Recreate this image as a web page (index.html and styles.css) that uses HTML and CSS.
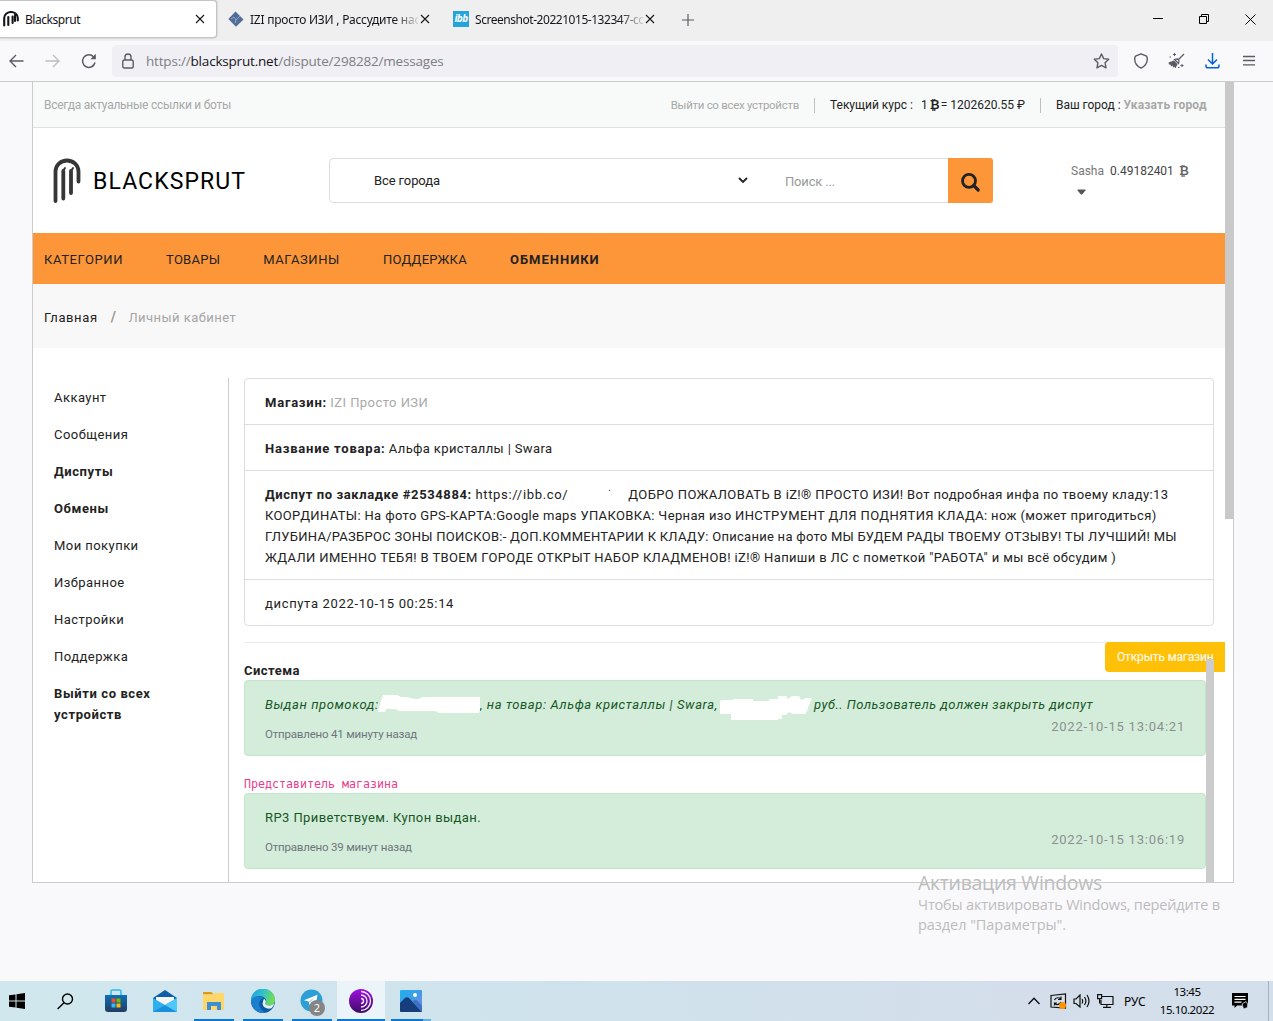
FILE: index.html
```html
<!DOCTYPE html>
<html lang="ru">
<head>
    <meta charset="UTF-8">
    <meta name="viewport" content="width=device-width, initial-scale=1.0">
    <title>Blacksprut</title>
    <link rel="stylesheet" href="styles.css">
</head>
<body>

<!-- tabs -->
<div class="tabs">
    <div class="tab tab-active">
        <svg class="fav" viewBox="0 0 16 16" fill="none" stroke="#15141a" stroke-width="2.1" stroke-linecap="round"><path d="M1.2 14.5V7a6.8 6 0 0 1 13.6 0v2.5M5.3 14V6M9.6 12V5.500M12 4v6"/></svg>
        <span class="tab-title">Blacksprut</span>
        <svg class="x" viewBox="0 0 10 10" stroke="#15141a" stroke-width="1.1"><path d="M1 1l8 8M9 1l-8 8"/></svg>
    </div>
    <div class="tab tab-forum">
        <svg class="fav" viewBox="0 0 16 16"><path fill="#4f6d96" d="M7.500 .5L15.500 8.500 8 15.800.4 8z"/><path d="M3 8l3-2 2 3 4-4M7 12l1-3" stroke="#93a7c3" fill="none"/></svg>
        <span class="tab-title fade">IZI просто ИЗИ , Рассудите нас</span>
        <svg class="x" viewBox="0 0 10 10" stroke="#15141a" stroke-width="1.1"><path d="M1 1l8 8M9 1l-8 8"/></svg>
    </div>
    <div class="tab tab-ibb">
        <span class="fav ibb">ibb</span>
        <span class="tab-title tight fade">Screenshot-20221015-132347-co</span>
        <svg class="x" viewBox="0 0 10 10" stroke="#15141a" stroke-width="1.1"><path d="M1 1l8 8M9 1l-8 8"/></svg>
    </div>
    <svg class="plus" viewBox="0 0 12 12" stroke="#5b5b66" stroke-width="1.2"><path d="M6 0v12M0 6h12"/></svg>
    <div class="win-buttons">
        <svg width="10" height="10" stroke="#000" fill="none"><path d="M0 4.500h10"/></svg>
        <svg width="10" height="10" stroke="#000" fill="none"><path d="M.5 2.500h7v7h-7zM2.500 2.500v-2h7v7h-2"/></svg>
        <svg width="11" height="11" stroke="#000" fill="none"><path d="M.5 .5l10 10M10.500 .5l-10 10"/></svg>
    </div>
</div>

<!-- address bar -->
<div class="toolbar">
    <svg class="back" width="15" height="14" fill="none" stroke="#5b5b66" stroke-width="1.4"><path d="M14.500 7H1M7 1L1 7l6 6"/></svg>
    <svg class="forward" width="15" height="14" fill="none" stroke="#bdbdc2" stroke-width="1.4"><path d="M.5 7H14M8 1l6 6-6 6"/></svg>
    <svg class="reload" width="16" height="16" fill="none" stroke="#5b5b66" stroke-width="1.5"><path d="M14 9.500A6.300 6.300 0 1 1 12.500 3.800L14 5"/><path d="M14.800 .8v5.400H9.400z" fill="#5b5b66" stroke="none"/></svg>
    <div class="url">
        <svg width="12" height="16" fill="none" stroke="#5b5b66" stroke-width="1.4"><rect x=".8" y="7" width="10.400" height="8" rx="1.500"/><path d="M3 7V4a3 3 0 0 1 6 0v3"/></svg>
        <span class="url-text">https://<b>blacksprut.net</b>/dispute/298282/messages</span>
        <svg class="star" width="17" height="16" fill="none" stroke="#5b5b66" stroke-width="1.400" stroke-linejoin="round"><path d="M8.500 1l2.200 4.600 5 .7-3.600 3.500.9 5-4.500-2.400L4 14.800l.9-5L1.300 6.300l5-.7z"/></svg>
    </div>
    <svg class="shield" width="16" height="16" fill="none" stroke="#5b5b66" stroke-width="1.400"><path d="M8 .8l5.500 2.400Q14.300 4 14.300 6q0 6-6.300 9.200Q1.700 12 1.700 6q0-2 .8-2.800z" stroke-linejoin="round"/></svg>
    <svg class="broom" width="17" height="17" fill="none" stroke="#5b5b66" stroke-width="1.300"><path d="M16 1l-5.500 5.500M6.500 6.500q3-1 4 0t0 4z"/><path d="M.5 9.500L6 7.500l3.500 3.800-2 4-1.300-1.600-1 .8-.7-2-1.500 1-.3-1.700-1.700-.3z" fill="#5b5b66" stroke="none"/><path d="M6.500 0v3M5 1.500h3M14 11v3M12.500 12.500h3M1.500 4h1.500M10 14.500h1.500" stroke-width="1"/></svg>
    <svg class="download" width="15" height="16" fill="none" stroke="#0061e0" stroke-width="1.500"><path d="M7.500 0v11M3 6.500L7.500 11 12 6.500M1 11.500v1.500a1.800 1.800 0 0 0 1.800 1.800h9.400A1.800 1.800 0 0 0 14 13v-1.500"/></svg>
    <svg class="menu" width="12" height="12" stroke="#5b5b66" stroke-width="1.300"><path d="M0 1.500h12M0 5.500h12M0 9.800h12"/></svg>
</div>

<div class="viewport">
<div class="page">
    <div class="site">
        <div class="topbar">
            <span class="muted links">Всегда актуальные ссылки и боты</span>
            <span class="muted logout">Выйти со всех устройств</span>
            <span class="rate"><span>Текущий курс :</span><span class="one">1</span><span class="btc">₿</span><span>= 1202620.55 ₽</span></span>
            <span class="city">Ваш город : <b>Указать город</b></span>
        </div>

        <header class="header">
            <svg class="logo" width="28" height="46" fill="none" stroke="#363636" stroke-width="3.800" stroke-linecap="round"><path d="M2.500 43V13.500a11.500 11 0 0 1 23 0v10M10.300 40.500V13M18 35V13"/><path d="M10 13l2-3M18 13l2-3" stroke-width="2"/></svg>
            <span class="brand">BLACKSPRUT</span>
            <div class="search">
                <span class="search-city">Все города</span>
                <svg width="10" height="7" fill="none" stroke="#222" stroke-width="1.800"><path d="M1 1l4 4 4-4"/></svg>
                <span class="search-text">Поиск ...</span>
                <span class="search-btn"><svg width="20" height="21" fill="none" stroke="#222"><circle cx="8" cy="8.800" r="6.500" stroke-width="2.800"/><path d="M12.700 13.500l4.500 4.500" stroke-width="3.200" stroke-linecap="round"/></svg></span>
            </div>
            <div class="user">
                <span class="name">Sasha</span><span>0.49182401</span><span class="btc">₿</span>
                <svg class="caret" width="9" height="6" fill="#555"><path d="M1 .5h7q1 .3.500 1L5.500 5q-1 1-2 0L.5 1.500Q0 .8 1 .5z"/></svg>
            </div>
        </header>

        <nav class="nav">
            <span class="n1">КАТЕГОРИИ</span>
            <span class="n2">ТОВАРЫ</span>
            <span class="n3">МАГАЗИНЫ</span>
            <span class="n4">ПОДДЕРЖКА</span>
            <span class="n5">ОБМЕННИКИ</span>
        </nav>

        <div class="breadcrumb"><span>Главная</span><i>/</i><span class="here">Личный кабинет</span></div>

        <div class="content">
            <aside class="sidebar">
                <a>Аккаунт</a>
                <a>Сообщения</a>
                <a class="bold">Диспуты</a>
                <a class="bold">Обмены</a>
                <a>Мои покупки</a>
                <a>Избранное</a>
                <a>Настройки</a>
                <a>Поддержка</a>
                <a class="bold">Выйти со всех устройств</a>
            </aside>

            <main class="main">
                <div class="list">
                    <div class="item"><b class="l1">Магазин:</b> <span class="shop">IZI Просто ИЗИ</span></div>
                    <div class="item"><b class="l2">Название товара:</b> <span class="product">Альфа кристаллы | Swara</span></div>
                    <div class="item">
                        <div class="line t1"><b>Диспут по закладке #2534884:</b> <span class="link">https://ibb.co/</span><span class="gap">.</span>ДОБРО ПОЖАЛОВАТЬ В iZ!® ПРОСТО ИЗИ! Вот подробная инфа по твоему кладу:13</div>
                        <div class="line t2">КООРДИНАТЫ: На фото GPS-КАРТА:Google maps УПАКОВКА: Черная изо ИНСТРУМЕНТ ДЛЯ ПОДНЯТИЯ КЛАДА: нож (может пригодиться)</div>
                        <div class="line t3">ГЛУБИНА/РАЗБРОС ЗОНЫ ПОИСКОВ:- ДОП.КОММЕНТАРИИ К КЛАДУ: Описание на фото МЫ БУДЕМ РАДЫ ТВОЕМУ ОТЗЫВУ! ТЫ ЛУЧШИЙ! МЫ</div>
                        <div class="line t4">ЖДАЛИ ИМЕННО ТЕБЯ! В ТВОЕМ ГОРОДЕ ОТКРЫТ НАБОР КЛАДМЕНОВ! iZ!® Напиши в ЛС с пометкой "РАБОТА" и мы всё обсудим )</div>
                    </div>
                    <div class="item date-item">диспута 2022-10-15 00:25:14</div>
                </div>

                <div class="chat">
                    <span class="open-shop">Открыть магазин</span>
                    <div class="messages">
                        <div class="from">Система</div>
                        <div class="alert">
                            <div class="text system"><span class="promo">Выдан промокод:</span><span class="hide h1"><svg width="103" height="18" fill="#fff"><path d="M5 0h14l4 2h6l7 2h4l5-2h57v13l-1 3H61l-4-2H22l-5-2H8l-1 3H0l2-8z"/></svg></span><span class="goods">, на товар: Альфа кристаллы | Swara,</span><span class="hide h2"><svg width="95" height="24" fill="#fff"><path d="M0 5l3-1h10V3h20v2h16V3h9V0h8l2 3 4-3h7l2 4 5-2h6l-3 7-2 6-2 3h-12l-4-2-3 3h-4v4h-4v2H11v-7H0z"/></svg></span><span class="close">руб.. Пользователь должен закрыть диспут</span></div>
                            <div class="meta"><span class="ago">Отправлено 41 минуту назад</span><span class="stamp">2022-10-15 13:04:21</span></div>
                        </div>
                        <code class="seller">Представитель магазина</code>
                        <div class="alert">
                            <div class="text">RP3 Приветствуем. Купон выдан.</div>
                            <div class="meta"><span class="ago">Отправлено 39 минут назад</span><span class="stamp">2022-10-15 13:06:19</span></div>
                        </div>
                    </div>
                    <div class="chat-scroll"></div>
                </div>
            </main>
        </div>
    </div>
    <div class="scrollbar"></div>
</div>
<div class="watermark">
    <div class="w1">Активация Windows</div>
    <div class="w2">Чтобы активировать Windows, перейдите в</div>
    <div class="w3">раздел "Параметры".</div>
</div>
</div>

<!-- taskbar -->
<div class="taskbar">
    <div class="app start"><svg width="16" height="16"><path d="M0 2.300L6.500 1.400V7.500H0zM7.500 1.200L16 0v7.500H7.500zM0 8.500h6.500v6.100L0 13.700zM7.500 8.500H16V16l-8.500-1.200z"/></svg></div>
    <div class="app find"><svg width="17" height="17" fill="none" stroke="#000" stroke-width="1.400"><circle cx="10.500" cy="6" r="5"/><path d="M7 9.800L.6 16"/></svg></div>
    <div class="app"><svg width="24" height="24">
        <defs><linearGradient id="store" x1="0" y1="0" x2="0" y2="1"><stop offset="0" stop-color="#0e70b4"/><stop offset="1" stop-color="#223c63"/></linearGradient></defs>
        <path d="M7 6V2.500q0-1.500 1.500-1.500h7Q17 1 17 2.500V6" fill="none" stroke="#2bbdf0" stroke-width="1.600"/>
        <path d="M1 6h22v14q0 3-3 3H4q-3 0-3-3z" fill="url(#store)"/>
        <path fill="#f25022" d="M7.500 9.500h4v4h-4z"/><path fill="#7fba00" d="M12.500 9.500h4v4h-4z"/><path fill="#38b6f1" d="M7.500 14.500h4v4h-4z"/><path fill="#ffb900" d="M12.500 14.500h4v4h-4z"/>
    </svg></div>
    <div class="app"><svg width="24" height="24">
        <path d="M0 9L12 1l12 8v3H0z" fill="#0d5ea8"/><path d="M3 8h18v8H3z" fill="#f3f5f6"/><path d="M0 9l12 7L24 9v14H0z" fill="#2fb0ee"/><path d="M0 23L12 16l12 7z" fill="#1a8fdc"/><path d="M12 16L24 9v14z" fill="#4fc7f8"/>
    </svg></div>
    <div class="app run"><svg width="22" height="20">
        <path d="M0 1h8.500l2 2.500H0z" fill="#dc9b12"/><path d="M0 3.500h10L11.500 2H21v17H0z" fill="#ffd768"/><path d="M4 11h14v8h-4v-4H8v4H4z" fill="#3c8fd4"/>
    </svg></div>
    <div class="app run"><svg width="24" height="24">
        <defs><linearGradient id="edge" x1="0" y1="0" x2="1" y2=".3"><stop offset="0" stop-color="#1f9fe0"/><stop offset=".5" stop-color="#2fbfd0"/><stop offset="1" stop-color="#6fdd58"/></linearGradient></defs>
        <circle cx="12" cy="12" r="12" fill="#0c59a4"/>
        <path d="M0 12A12 12 0 0 1 24 11q0 5.500-6 5.500-4 0-3.500-2 1.500-2 0-4.500Q12 6.500 7 7.200 1.500 8 0 12z" fill="url(#edge)"/>
        <path d="M0 12Q1.500 7.500 7 7.200q4 0 6 2.300-4.500 0-5 5Q8 20 14.500 23.600A12 12 0 0 1 0 12z" fill="#1b7fd0"/>
        <path d="M13 9.800q3 2.200 1.200 5 .3 2.200 4.800 1.700 3-.3 4.500-2-1 2.800-3 4.800-4 1-7-1-3.500-2.800-.5-8.500z" fill="#e4f0f5"/>
    </svg></div>
    <div class="app run telegram"><svg width="24" height="24">
        <circle cx="11.500" cy="11.500" r="11" fill="#2c9fd6"/><path d="M4 11.200L17.500 5.800 15.500 17l-4-3-2 2-.8-3.600z" fill="#fff"/><path d="M8.700 12.400L15 8l-5 5.200z" fill="#a9cbe0"/>
    </svg><span class="badge">2</span></div>
    <div class="app run active"><svg width="24" height="24" fill="none">
        <defs><linearGradient id="tor" x1="0" y1="0" x2="0" y2="1"><stop offset="0" stop-color="#a20fe0"/><stop offset="1" stop-color="#3b0c66"/></linearGradient></defs>
        <circle cx="12" cy="12" r="12" fill="url(#tor)"/><path d="M12 2.500a9.500 9.500 0 0 1 0 19M12 6a6 6 0 0 1 0 12M12 9.500a2.500 2.500 0 0 1 0 5" stroke="#f4e8fb" stroke-width="1.400"/>
    </svg></div>
    <div class="app run photos"><svg width="22" height="22">
        <defs><linearGradient id="sky" x1="0" y1="0" x2="1" y2="1"><stop offset="0" stop-color="#1fb2ea"/><stop offset=".5" stop-color="#3f9be8"/><stop offset="1" stop-color="#8e83df"/></linearGradient></defs>
        <rect width="22" height="22" rx="1" fill="url(#sky)"/><path d="M0 13l5-5q2-1.500 4 0l13 14H1q-1 0-1-1z" fill="#173e7c"/><path d="M12.500 11.500l1.500-1q1.500-1 3 0l5 5V22z" fill="#3e6fc4"/><circle cx="15" cy="5" r="2" fill="#fff"/>
    </svg></div>

    <div class="tray">
        <svg width="12" height="8" fill="none" stroke="#111" stroke-width="1.400"><path d="M.5 7L6 1.300 11.500 7"/></svg>
        <svg class="sync" width="17" height="17" fill="none" stroke="#111" stroke-width="1.200"><path d="M1 2.500L15.500 1v14L1 14zM4.500 7q1-3 5-2l1 1M11 3.500v3H8M11 9q-1 3-5 2.500L4.500 10M4.500 12.500V10H7"/><circle cx="12.500" cy="12.500" r="3.500" fill="#ff9500" stroke="none"/></svg>
        <svg class="volume" width="17" height="14" fill="none" stroke="#111" stroke-width="1.200"><path d="M1 5h2l4-4v12L3 9.500H1zM9 5q1.300 2 0 4.500M11.500 3q2.800 4 0 8M14 1q4 6 0 12"/></svg>
        <svg class="net" width="17" height="14" fill="none" stroke="#111" stroke-width="1.200"><path d="M5 2.500h11v8H4V6M9.800 10.500v3M6 13.400h8M.6 .6h4v4h-4zM2.600 4.600v5"/></svg>
        <span class="lang">РУС</span>
        <span class="clock">13:45<br><em>15.10.2022</em></span>
        <svg class="notes" width="17" height="17"><path d="M0 0h16v12.500H5L2.500 15v-2.500H0z"/><path d="M2.500 3.500h11M2.500 6.300h11M2.500 9.200h7" stroke="#fff" stroke-width="1.200"/><path d="M10 11l4-2.500q2.500 2 1.500 6l-4 1.500z" stroke="#d5dfea" stroke-width=".8"/></svg>
        <span class="peek"></span>
    </div>
</div>

</body>
</html>
```
FILE: styles.css
```css
* {
    box-sizing: border-box;
}

body {
    margin: 0;
    width: 1273px;
    height: 1021px;
    overflow: hidden;
    background: #f9f9fb;
    font-family: "Roboto", sans-serif;
    font-size: 13px;
    line-height: 21px;
    color: #222;
}

svg {
    display: block;
    flex: none;
}

/* tabs */
.tabs {
    display: flex;
    height: 41px;
    background: #efefef;
    font-family: "Noto Sans", "Open Sans", sans-serif;
    font-size: 12px;
    color: #15141a;
}

.tab {
    display: flex;
    align-items: center;
    height: 38px;
    padding-left: 3px;
    white-space: nowrap;
}

.tab-active {
    width: 217px;
    background: #fff;
    border: 1px solid #c4c4c8;
    border-left: 0;
    border-radius: 0 4px 4px 0;
    box-shadow: 0 0 2px rgba(0, 0, 0, 0.3);
}

.tab-forum {
    width: 225px;
    padding-left: 11px;
}

.tab-ibb {
    width: 226px;
    padding-left: 11px;
}

.fav {
    width: 16px;
    height: 16px;
    flex: none;
}

.ibb {
    background: #24a4dd;
    color: #fff;
    font: italic bold 10px/15px "Open Sans", sans-serif;
    text-align: center;
    letter-spacing: -0.6px;
}

.tab-title {
    width: 168px;
    margin-left: 6px;
    letter-spacing: -0.22px;
}

.tab-active .tab-title {
    width: 168px;
    letter-spacing: -0.46px;
}

.tab-title.tight {
    letter-spacing: -0.46px;
}

.fade {
    -webkit-mask-image: linear-gradient(to right, #000 144px, transparent 172px);
    mask-image: linear-gradient(to right, #000 144px, transparent 172px);
}

.x {
    width: 10px;
    height: 10px;
    margin-left: 2px;
}

.plus {
    width: 12px;
    height: 12px;
    margin: 14px 0 0 14px;
}

.win-buttons {
    display: flex;
    gap: 36px;
    margin: 14px 17px 0 auto;
}

/* address bar */
.toolbar {
    display: flex;
    align-items: center;
    height: 41px;
    padding-left: 9px;
    border-bottom: 1px solid #ccc;
}

.forward {
    margin-left: 21px;
}

.reload {
    margin-left: 21px;
}

.url {
    display: flex;
    align-items: center;
    width: 1006px;
    height: 32px;
    margin-left: 15px;
    padding: 0 8px 0 10px;
    background: #f0f0f4;
    border-radius: 4px;
}

.url-text {
    margin-left: 12px;
    font-family: "Open Sans", sans-serif;
    font-size: 13.5px;
    letter-spacing: -0.19px;
    color: #7d7d85;
}

.url-text b {
    font-weight: normal;
    color: #15141a;
}

.star {
    margin-left: auto;
}

.shield {
    margin-left: 15px;
}

.broom {
    margin-left: 19px;
}

.download {
    margin-left: 20px;
}

.menu {
    margin-left: 23px;
}

/* page */
.viewport {
    position: relative;
    height: 899px;
}

.page {
    display: flex;
    width: 1202px;
    height: 801px;
    margin-left: 32px;
    border: 1px solid #ccc;
    border-top: 0;
    background: #fff;
}

.site {
    width: 1192px;
    height: 800px;
    overflow: hidden;
    flex: none;
}

.scrollbar {
    width: 9px;
    height: 437px;
    margin-right: -1px;
    background: #c9c9c9;
    flex: none;
}

.topbar {
    display: flex;
    align-items: center;
    height: 46px;
    padding: 2px 0 0 11px;
    background: #f8faf9;
    border-bottom: 1px solid #e1e1e1;
    font-size: 12px;
    white-space: nowrap;
}

.muted {
    color: #a8a8a8;
}

.links {
    letter-spacing: -0.26px;
}

.logout {
    margin-left: auto;
    font-size: 11.5px;
    letter-spacing: -0.3px;
}

.rate,
.city {
    display: flex;
    height: 15px;
    line-height: 14px;
    margin-left: 15px;
    padding-left: 15px;
    border-left: 1px solid #b9c4bd;
}

.one {
    margin-left: 8px;
}

.btc {
    width: 11px;
    margin-left: 2px;
    font: bold 12px/14px "DejaVu Sans", sans-serif;
}

.city {
    width: 185px;
    letter-spacing: -0.02px;
}

.city b {
    margin-left: 3px;
    color: #a8a8a8;
    letter-spacing: 0.17px;
}

.header {
    display: flex;
    align-items: center;
    height: 105px;
    padding-left: 20px;
}

.brand {
    width: 237px;
    margin: 2px 0 0 12px;
    font-size: 23px;
    letter-spacing: 1.1px;
    color: #000;
}

.search {
    display: flex;
    align-items: center;
    width: 664px;
    height: 45px;
    margin-left: -1px;
    border: 1px solid #ddd;
    border-right: 0;
    border-radius: 5px;
}

.search-city {
    width: 364px;
    padding-left: 44px;
    letter-spacing: -0.1px;
}

.search svg {
    margin-left: 44px;
}

.search-text {
    margin: 2px 0 0 37px;
    color: #9a9a9a;
    letter-spacing: -0.17px;
}

.search-btn {
    display: flex;
    align-items: center;
    width: 45px;
    height: 45px;
    margin-left: auto;
    background: #fd9638;
    border-radius: 0 3px 3px 0;
}

.search .search-btn svg {
    margin: 3px 0 0 13px;
}

.user {
    display: flex;
    flex-wrap: wrap;
    width: 130px;
    margin: -2px 0 0 78px;
    line-height: 14px;
    font-size: 12px;
    color: #444;
}

.user .name {
    width: 39px;
    color: #777;
}

.user .btc {
    margin-left: 5px;
    color: #666;
}

.user .caret {
    margin: 11px 60px 0 6px;
}

.nav {
    display: flex;
    align-items: center;
    height: 51px;
    padding: 2px 0 0 11px;
    background: #fd9638;
}

.nav span {
    margin-right: 43px;
    letter-spacing: 0.6px;
}

.nav .n2,
.nav .n4 {
    letter-spacing: 0.26px;
}

.nav .n5 {
    font-weight: bold;
    letter-spacing: 1px;
}

.breadcrumb {
    display: flex;
    align-items: center;
    height: 64px;
    padding: 2px 0 0 11px;
    background: #f8f8f8;
    letter-spacing: 0.6px;
}

.breadcrumb i {
    margin: 0 12px 0 13px;
    font-size: 14px;
    font-style: normal;
    font-weight: bold;
    color: #999;
}

.breadcrumb .here {
    color: #a5a5a5;
    letter-spacing: 0.46px;
}

.content {
    display: flex;
    padding-top: 30px;
}

.sidebar {
    width: 196px;
    height: 510px;
    padding-top: 1px;
    border-right: 1px solid #ccc;
    letter-spacing: 0.45px;
}

.sidebar a {
    display: block;
    padding: 8px 60px 8px 21px;
}

.sidebar .bold {
    font-weight: bold;
    letter-spacing: 0.6px;
}

.main {
    width: 970px;
    margin-left: 15px;
}

.list {
    border: 1px solid #ddd;
    border-radius: 4px;
}

.item {
    padding: 13px 20px 11px;
    border-bottom: 1px solid #ddd;
    white-space: nowrap;
}

.item:last-child {
    border-bottom: 0;
}

.l1,
.l2 {
    letter-spacing: 0.78px;
}

.shop {
    color: #aaa;
    letter-spacing: 0.44px;
}

.product {
    letter-spacing: 0.36px;
}

.t1 {
    letter-spacing: 0.38px;
}

.t1 b {
    letter-spacing: 0.6px;
}

.link {
    letter-spacing: 0.67px;
}

.gap {
    display: inline-block;
    width: 60px;
    height: 21px;
    padding-left: 40px;
    line-height: 8px;
    vertical-align: top;
    font-size: 10px;
}

.t2 {
    letter-spacing: 0.36px;
}

.t3 {
    letter-spacing: 0.27px;
}

.t4 {
    letter-spacing: 0.36px;
}

.date-item {
    letter-spacing: 0.66px;
}

/* chat */
.chat {
    position: relative;
    display: flex;
    height: 240px;
    margin-top: 16px;
    padding-top: 16px;
    border-top: 1px solid #e8eaf3;
}

.messages {
    width: 962px;
}

.chat-scroll {
    width: 8px;
    background: #ccc;
    z-index: 1;
}

.open-shop {
    position: absolute;
    top: -1px;
    right: -11px;
    width: 120px;
    height: 30px;
    padding: 5px 12px;
    background: #ffc107;
    border-radius: 4px 0 0 4px;
    color: #fff;
    font-size: 12px;
    letter-spacing: -0.15px;
    white-space: nowrap;
}

.from {
    padding-top: 1px;
    height: 21px;
    font-weight: bold;
    letter-spacing: 0.47px;
}

.alert {
    height: 76px;
    padding: 13px 20px;
    background: #d4edda;
    border: 1px solid #c3e6cb;
    border-radius: 4px;
    color: #155724;
}

.text {
    height: 21px;
    white-space: nowrap;
    letter-spacing: 0.41px;
}

.system {
    display: flex;
    font-style: italic;
}

.promo {
    width: 115px;
    letter-spacing: 0.58px;
}

.goods {
    width: 240px;
    letter-spacing: 0.58px;
}

.hide {
    position: relative;
    z-index: 1;
}

.hide svg {
    position: absolute;
}

.h1 {
    width: 100px;
}

.h1 svg {
    left: -2px;
    top: 1px;
}

.h2 {
    width: 94px;
}

.h2 svg {
    left: 0;
    top: 2px;
}

.close {
    letter-spacing: 0.48px;
}

.meta {
    display: flex;
    justify-content: space-between;
}

.ago {
    margin-top: 9px;
    font-size: 11.5px;
    letter-spacing: -0.19px;
    color: #6c757d;
}

.stamp {
    margin-top: 1px;
    letter-spacing: 0.78px;
    color: #8c908e;
}

.seller {
    display: block;
    height: 37px;
    padding-top: 18px;
    font: 11.63px/21px "DejaVu Sans Mono", monospace;
    color: #e83e8c;
}

.watermark {
    position: absolute;
    left: 918px;
    top: 789px;
    font-family: "Open Sans", sans-serif;
    font-size: 14.5px;
    line-height: 20px;
    color: #bcbcbd;
    white-space: nowrap;
}

.w1 {
    height: 24px;
    font-size: 19.5px;
    line-height: 24px;
    letter-spacing: -0.32px;
}

.w2 {
    letter-spacing: -0.17px;
}

.w3 {
    letter-spacing: -0.05px;
}

/* taskbar */
.taskbar {
    display: flex;
    height: 40px;
    background: linear-gradient(to right, #d1e7ee, #cfe3ec 40%, #d3deea 80%, #d3dfeb);
}

.app {
    display: flex;
    align-items: center;
    justify-content: center;
    width: 49px;
    height: 40px;
}

.start {
    width: 34px;
}

.find {
    width: 57px;
    padding-left: 5px;
}

.run {
    background: linear-gradient(#0a78d6, #0a78d6) 50% 100% / 40px 2px no-repeat;
}

.app.active {
    width: 48px;
    margin: 0 1px;
    background: linear-gradient(#0a78d6, #0a78d6) 0 100% / 48px 2px no-repeat #ebf4f8;
}

.telegram {
    position: relative;
}

.badge {
    position: absolute;
    left: 22px;
    top: 19px;
    width: 16px;
    height: 16px;
    border-radius: 50%;
    background: #858585;
    color: #fff;
    font: 11px/16px "Noto Sans", sans-serif;
    text-align: center;
}

.photos {
    background: linear-gradient(to right, #0a78d6 32px, #66ade4 32px) 50% 100% / 40px 2px no-repeat;
}

.tray {
    display: flex;
    align-items: center;
    margin-left: auto;
    font-family: "Noto Sans", sans-serif;
    font-size: 12px;
    color: #000;
}

.sync {
    margin-left: 10px;
}

.volume {
    margin-left: 6px;
}

.net {
    margin-left: 7px;
}

.lang {
    width: 22px;
    margin-left: 10px;
}

.clock {
    width: 60px;
    margin-left: 11px;
    line-height: 18px;
    text-align: center;
    font-size: 11.5px;
    letter-spacing: -0.45px;
}

.clock em {
    font-style: normal;
}

.notes {
    margin-left: 15px;
}

.peek {
    width: 5px;
    height: 40px;
    margin-left: 19px;
    border-left: 1px solid #a4b0bd;
}
```
